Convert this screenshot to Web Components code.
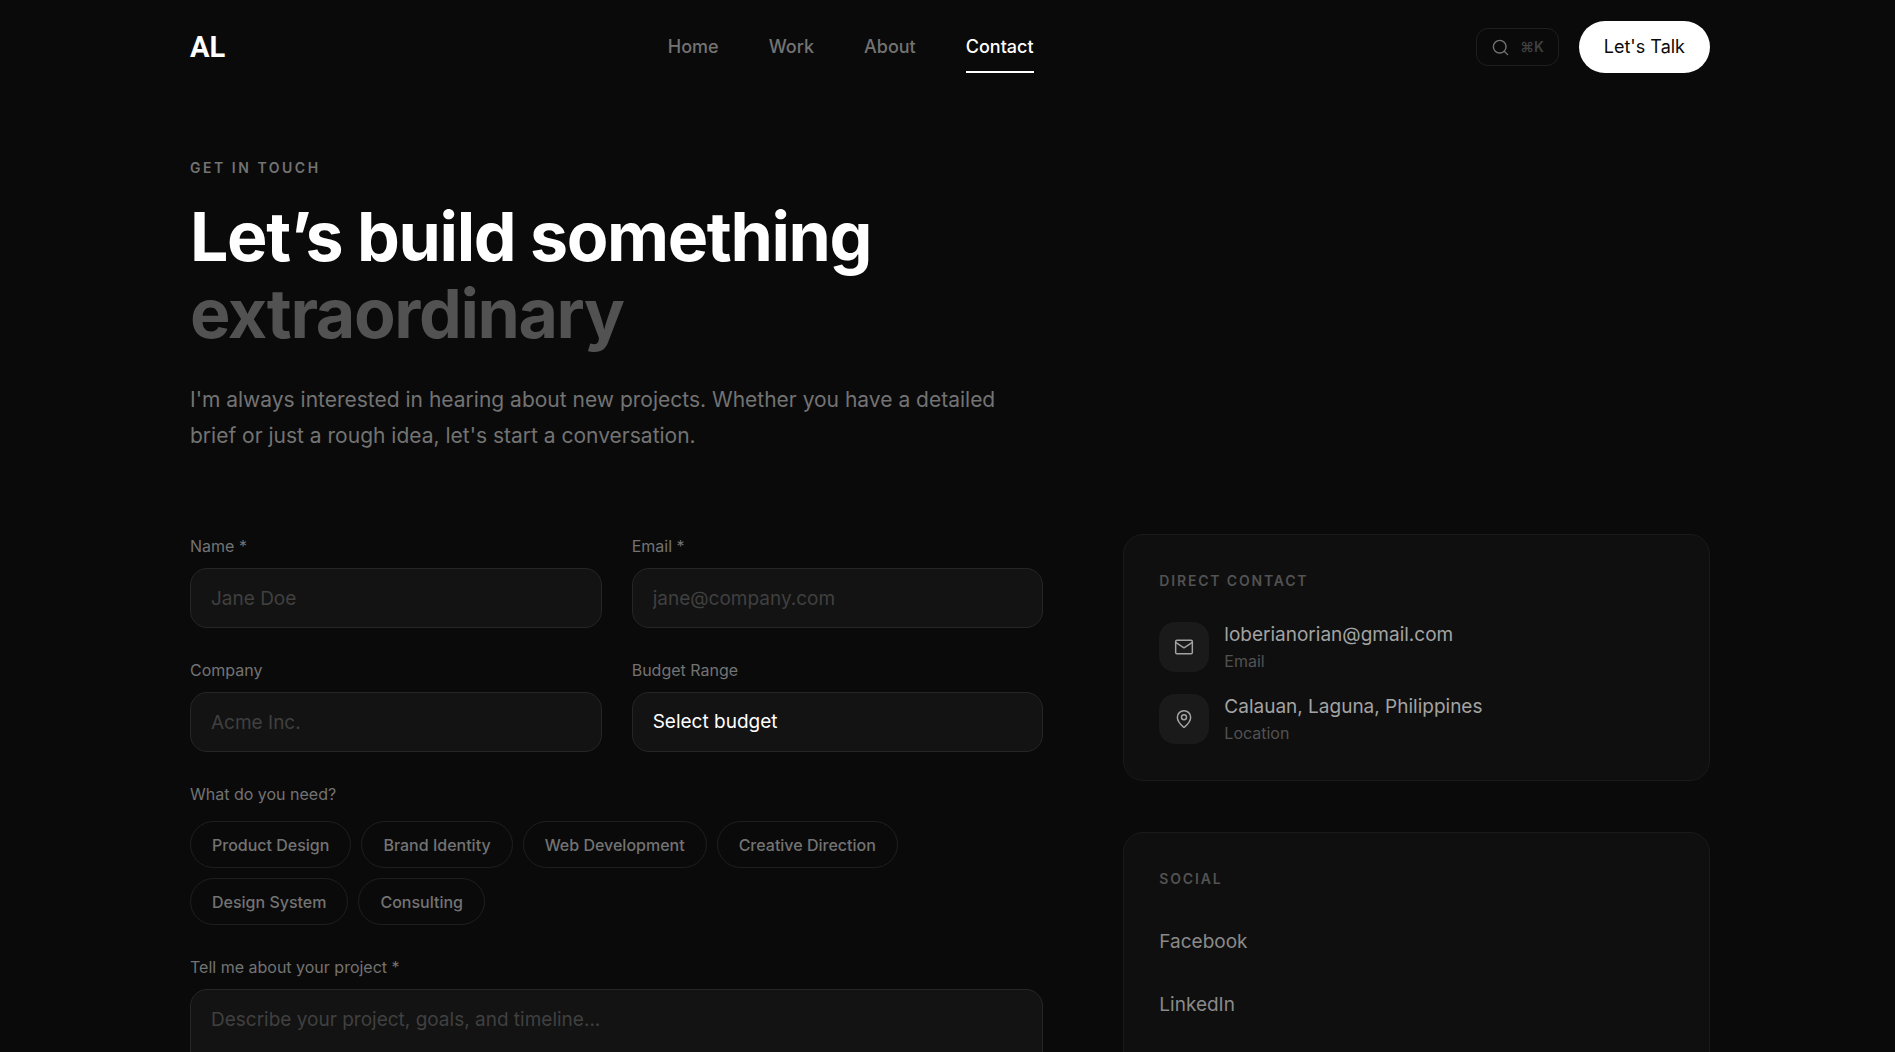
<!DOCTYPE html>
<html lang="en">
<head>
<meta charset="UTF-8">
<meta name="viewport" content="width=device-width, initial-scale=1.0">
<title>AL - Contact</title>
<style>
  :root {
    --bg: #0a0a0a;
    --card: #0f0f0f;
    --field: #131313;
    --tile: #1a1a1a;
    --line: #262626;
    --line-soft: #1a1a1a;
    --white: #ffffff;
    --text: #a3a3a3;
    --muted: #737373;
    --dim: #525252;
    --faint: #404040;
  }
  body {
    margin: 0;
    background: var(--bg);
    color: var(--white);
    font-family: Inter, "Liberation Sans", sans-serif;
    font-size: 19px;
    line-height: 28px;
  }
</style>
</head>
<body>
<contact-page>
  <site-header slot="header"></site-header>
  <page-hero slot="hero" eyebrow="Get in touch">
    <span slot="title">Let’s build something</span>
    <span slot="accent">extraordinary</span>
    I'm always interested in hearing about new projects. Whether you have a detailed brief or just a rough idea, let's start a conversation.
  </page-hero>
  <contact-form slot="form"></contact-form>
  <info-card slot="aside" heading="Direct contact">
    <contact-item icon="mail" note="Email">loberianorian@gmail.com</contact-item>
    <contact-item icon="pin" note="Location">Calauan, Laguna, Philippines</contact-item>
  </info-card>
  <info-card slot="aside" heading="Social">
    <social-links></social-links>
  </info-card>
</contact-page>

<script>
const icons = {
  search: '<circle cx="11" cy="11" r="8"/><path d="m21 21-4.3-4.3"/>',
  mail: '<rect x="2" y="4" width="20" height="16" rx="1.5"/><path d="m2 6.500 10 6.500 10-6.500"/>',
  pin: '<path d="M20 10c0 5-5.500 10.200-7.400 11.800a1 1 0 0 1-1.200 0C9.500 20.200 4 15 4 10a8 8 0 0 1 16 0"/><circle cx="12" cy="10" r="3"/>'
};

function icon(name, size) {
  return `<svg width="${size}" height="${size}" viewBox="0 0 24 24" fill="none" stroke="currentColor" stroke-width="1.75" stroke-linecap="round" stroke-linejoin="round" aria-hidden="true">${icons[name]}</svg>`;
}

class ContactPage extends HTMLElement {
  constructor() {
    super();
    this.attachShadow({ mode: "open" }).innerHTML = `
    <style>
    :host {
      display: block;
      box-sizing: border-box;
      height: 100vh;
      overflow: hidden;
      padding: 0 185px 0 190px;
    }
    .columns {
      display: grid;
      grid-template-columns: repeat(12, minmax(0, 1fr));
      column-gap: 80px;
      align-items: start;
      padding-top: 80px;
    }
    .form { grid-column: span 7; }
    aside {
      grid-column: span 5;
      display: flex;
      flex-direction: column;
      gap: 51px;
    }
    @media (max-width: 1200px) {
      :host { padding: 0 32px; height: auto; }
      .form, aside { grid-column: span 12; }
      aside { margin-top: 50px; }
      .columns { column-gap: 0; }
    }
    </style>
    <slot name="header"></slot>
    <main>
      <slot name="hero"></slot>
      <div class="columns">
        <div class="form"><slot name="form"></slot></div>
        <aside><slot name="aside"></slot></aside>
      </div>
    </main>
    `;
  }
}

class SiteHeader extends HTMLElement {
  constructor() {
    super();
    this.attachShadow({ mode: "open" }).innerHTML = `
    <style>
    :host { display: block; }
    header {
      display: flex;
      align-items: center;
      justify-content: space-between;
      padding: 21px 0;
    }
    a { text-decoration: none; color: inherit; }
    .logo {
      font: 700 29px/36px Roboto, sans-serif;
    }
    nav { display: flex; gap: 50px; }
    nav a {
      font-size: 18px;
      font-weight: 500;
      line-height: 52px;
      color: var(--muted);
    }
    nav a.active {
      color: var(--white);
      box-shadow: inset 0 -2px var(--white);
    }
    .actions { display: flex; align-items: center; gap: 20px; }
    .search {
      display: flex;
      align-items: center;
      gap: 10px;
      height: 38px;
      padding: 0 14px;
      border: 1px solid #1f1f1f;
      border-radius: 12px;
      background: none;
      color: var(--muted);
      font: inherit;
    }
    kbd {
      font: 600 14px/20px Inter, "DejaVu Sans", sans-serif;
      color: var(--faint);
    }
    .talk {
      padding: 0 25px;
      border-radius: 26px;
      background: var(--white);
      color: var(--bg);
      font-size: 18px;
      line-height: 52px;
    }
    </style>
    <header>
      <a class="logo" href="#home">AL</a>
      <nav>
        <a href="#home">Home</a>
        <a href="#work">Work</a>
        <a href="#about">About</a>
        <a href="#contact" class="active" aria-current="page">Contact</a>
      </nav>
      <div class="actions">
        <button class="search" type="button" aria-label="Search">${icon("search", 19)}<kbd>⌘K</kbd></button>
        <a class="talk" href="#contact">Let's Talk</a>
      </div>
    </header>
    `;
  }
}

class PageHero extends HTMLElement {
  connectedCallback() {
    this.attachShadow({ mode: "open" }).innerHTML = `
    <style>
    :host { display: block; padding-top: 63px; }
    .eyebrow {
      margin: 0 0 20px;
      font-size: 14px;
      font-weight: 600;
      line-height: 21px;
      letter-spacing: 0.18em;
      text-transform: uppercase;
      color: var(--muted);
    }
    h1 {
      margin: 0 0 30px;
      font-size: 68px;
      font-weight: 700;
      line-height: 77px;
      letter-spacing: -0.02em;
    }
    h1 span { display: block; }
    .accent { color: var(--dim); }
    .lead {
      margin: 0;
      max-width: 840px;
      font-size: 21px;
      line-height: 36px;
      color: var(--muted);
    }
    </style>
    <p class="eyebrow">${this.getAttribute("eyebrow")}</p>
    <h1><span><slot name="title"></slot></span><span class="accent"><slot name="accent"></slot></span></h1>
    <p class="lead"><slot></slot></p>
    `;
  }
}

class FormField extends HTMLElement {
  connectedCallback() {
    const type = this.getAttribute("type") || "text";
    const placeholder = this.getAttribute("placeholder") || "";
    let control = `<input id="control" type="${type}" placeholder="${placeholder}">`;
    if (type === "select") {
      control = `<select id="control"><option>${placeholder}</option></select>`;
    } else if (type === "textarea") {
      control = `<textarea id="control" rows="6" placeholder="${placeholder}"></textarea>`;
    }

    this.attachShadow({ mode: "open" }).innerHTML = `
    <style>
    :host { display: block; }
    label {
      display: block;
      margin-bottom: 10px;
      font-size: 16px;
      line-height: 24px;
      color: var(--muted);
    }
    input, select, textarea {
      display: block;
      box-sizing: border-box;
      width: 100%;
      height: 60px;
      margin: 0;
      padding: 0 20px;
      border: 1px solid var(--line);
      border-radius: 17px;
      background: var(--field);
      color: var(--white);
      font: inherit;
      appearance: none;
      outline: none;
    }
    textarea { height: auto; padding: 16px 20px; resize: none; }
    ::placeholder { color: var(--faint); opacity: 1; }
    :focus { border-color: var(--dim); }
    </style>
    <label for="control">${this.getAttribute("label")}</label>
    ${control}
    `;
  }
}

class ChipGroup extends HTMLElement {
  connectedCallback() {
    const options = this.getAttribute("options").split(",");
    this.attachShadow({ mode: "open" }).innerHTML = `
    <style>
    :host { display: block; }
    fieldset { margin: 0; padding: 0; border: 0; min-width: 0; }
    legend {
      padding: 0;
      margin-bottom: 15px;
      font-size: 16px;
      line-height: 24px;
      color: var(--muted);
    }
    .chips { display: flex; flex-wrap: wrap; gap: 10px; max-width: 800px; }
    button {
      height: 47px;
      padding: 0 21px;
      border: 1px solid #1f1f1f;
      border-radius: 24px;
      background: none;
      color: var(--muted);
      font: inherit;
      font-size: 16px;
      font-weight: 500;
      cursor: pointer;
    }
    button[aria-pressed="true"] { background: var(--white); color: var(--bg); }
    </style>
    <fieldset>
      <legend>${this.getAttribute("label")}</legend>
      <div class="chips">
        ${options.map(o => `<button type="button" aria-pressed="false">${o}</button>`).join("")}
      </div>
    </fieldset>
    `;
    this.shadowRoot.querySelectorAll("button").forEach(button => {
      button.addEventListener("click", () => {
        button.setAttribute("aria-pressed", button.getAttribute("aria-pressed") !== "true");
      });
    });
  }
}

class ContactForm extends HTMLElement {
  constructor() {
    super();
    this.attachShadow({ mode: "open" }).innerHTML = `
    <style>
    :host { display: block; }
    form {
      display: grid;
      grid-template-columns: repeat(2, minmax(0, 1fr));
      gap: 30px;
    }
    .wide { grid-column: 1 / -1; }
    </style>
    <form>
      <form-field label="Name *" placeholder="Jane Doe"></form-field>
      <form-field label="Email *" type="email" placeholder="jane@company.com"></form-field>
      <form-field label="Company" placeholder="Acme Inc."></form-field>
      <form-field label="Budget Range" type="select" placeholder="Select budget"></form-field>
      <chip-group class="wide" label="What do you need?" options="Product Design,Brand Identity,Web Development,Creative Direction,Design System,Consulting"></chip-group>
      <form-field class="wide" label="Tell me about your project *" type="textarea" placeholder="Describe your project, goals, and timeline..."></form-field>
    </form>
    `;
  }
}

class InfoCard extends HTMLElement {
  connectedCallback() {
    this.attachShadow({ mode: "open" }).innerHTML = `
    <style>
    :host {
      display: block;
      padding: 35px;
      border: 1px solid var(--line-soft);
      border-radius: 20px;
      background: var(--card);
    }
    h2 {
      margin: 0 0 30px;
      font-size: 14px;
      font-weight: 600;
      line-height: 21px;
      letter-spacing: 0.13em;
      text-transform: uppercase;
      color: var(--dim);
    }
    .body { display: flex; flex-direction: column; gap: 20px; }
    </style>
    <h2>${this.getAttribute("heading")}</h2>
    <div class="body"><slot></slot></div>
    `;
  }
}

class ContactItem extends HTMLElement {
  connectedCallback() {
    this.attachShadow({ mode: "open" }).innerHTML = `
    <style>
    :host { display: flex; align-items: center; gap: 15px; }
    .tile {
      display: grid;
      place-items: center;
      width: 50px;
      height: 50px;
      border-radius: 16px;
      background: var(--tile);
      color: var(--text);
    }
    .value { color: var(--text); }
    .note { font-size: 16px; line-height: 24px; color: var(--dim); }
    </style>
    <div class="tile">${icon(this.getAttribute("icon"), 20)}</div>
    <div>
      <div class="value"><slot></slot></div>
      <div class="note">${this.getAttribute("note")}</div>
    </div>
    `;
  }
}

class SocialLinks extends HTMLElement {
  constructor() {
    super();
    this.attachShadow({ mode: "open" }).innerHTML = `
    <style>
    :host { display: block; margin-top: -9px; }
    a {
      display: block;
      line-height: 63px;
      color: #8a8a8a;
      text-decoration: none;
    }
    a:hover { color: var(--white); }
    </style>
    <a href="#facebook">Facebook</a>
    <a href="#linkedin">LinkedIn</a>
    `;
  }
}

customElements.define("contact-page", ContactPage);
customElements.define("site-header", SiteHeader);
customElements.define("page-hero", PageHero);
customElements.define("form-field", FormField);
customElements.define("chip-group", ChipGroup);
customElements.define("contact-form", ContactForm);
customElements.define("info-card", InfoCard);
customElements.define("contact-item", ContactItem);
customElements.define("social-links", SocialLinks);
</script>
</body>
</html>
